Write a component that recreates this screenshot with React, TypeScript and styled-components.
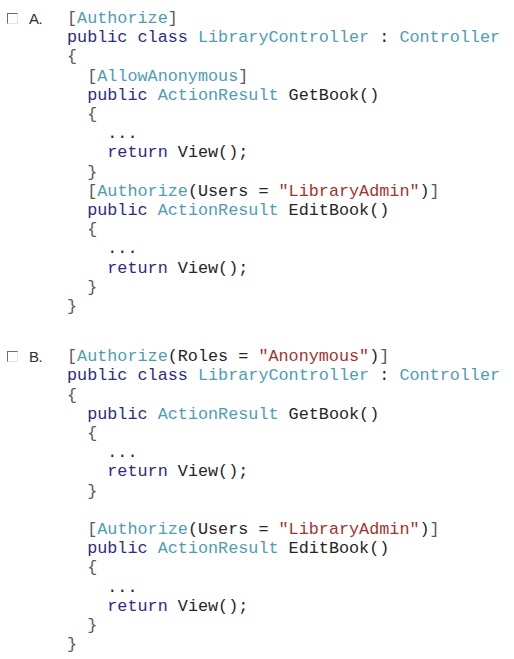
import React from "react";
import styled, { createGlobalStyle } from "styled-components";

const Global = createGlobalStyle`
  html, body { margin: 0; padding: 0; background: #ffffff; }
  body { width: 514px; height: 659px; overflow: hidden; }
`;

const Page = styled.main`
  display: flex;
  flex-direction: column;
  gap: 31px;
  padding-top: 9px;
`;

const Option = styled.section`
  display: flex;
  align-items: flex-start;
`;

const Marker = styled.div`
  width: 60px;
  flex: none;
  display: flex;
  align-items: center;
  gap: 11px;
  padding-left: 7px;
  height: 19px;
`;

const Checkbox = styled.span`
  display: block;
  width: 11px;
  height: 11px;
  box-sizing: border-box;
  border-top: 1px solid #6e6e6e;
  border-left: 1px solid #6e6e6e;
  border-right: 1px solid #e4e4e4;
  border-bottom: 1px solid #e4e4e4;
  background: #fff;
`;

const Letter = styled.span`
  font-family: "Liberation Sans", Arial, sans-serif;
  font-size: 15px;
  color: #2f2f2f;
  letter-spacing: -0.5px;
`;

const Code = styled.pre`
  margin: 0;
  font-family: "Liberation Mono", "Courier New", monospace;
  font-size: 16.8px;
  line-height: 19.2px;
  color: #262626;
`;

type Kind = "kw" | "type" | "str" | "punct" | "plain";

const colors: Record<Kind, string> = {
  kw: "#2c2c86",
  type: "#4e9db3",
  str: "#a3332f",
  punct: "#5a5a5a",
  plain: "#262626",
};

const Tok = styled.span<{ $kind: Kind }>`
  color: ${(p) => colors[p.$kind]};
`;

const KEYWORDS = new Set(["public", "class", "return"]);
const TYPES = new Set([
  "Authorize",
  "AllowAnonymous",
  "LibraryController",
  "Controller",
  "ActionResult",
]);

function tokenize(line: string): { text: string; kind: Kind }[] {
  const out: { text: string; kind: Kind }[] = [];
  const re = /("[^"]*")|([A-Za-z_]+)|([\[\]{}])|([^A-Za-z_"\[\]{}]+)/g;
  let m: RegExpExecArray | null;
  while ((m = re.exec(line))) {
    if (m[1]) out.push({ text: m[1], kind: "str" });
    else if (m[2]) {
      const w = m[2];
      out.push({
        text: w,
        kind: KEYWORDS.has(w) ? "kw" : TYPES.has(w) ? "type" : "plain",
      });
    } else if (m[3]) out.push({ text: m[3], kind: "punct" });
    else out.push({ text: m[4], kind: "plain" });
  }
  return out;
}

const codeA = `[Authorize]
public class LibraryController : Controller
{
  [AllowAnonymous]
  public ActionResult GetBook()
  {
    ...
    return View();
  }
  [Authorize(Users = "LibraryAdmin")]
  public ActionResult EditBook()
  {
    ...
    return View();
  }
}`;

const codeB = `[Authorize(Roles = "Anonymous")]
public class LibraryController : Controller
{
  public ActionResult GetBook()
  {
    ...
    return View();
  }

  [Authorize(Users = "LibraryAdmin")]
  public ActionResult EditBook()
  {
    ...
    return View();
  }
}`;

const CodeBlock: React.FC<{ source: string }> = ({ source }) => (
  <Code>
    {source.split("\n").map((line, i) => (
      <React.Fragment key={i}>
        {tokenize(line).map((t, j) => (
          <Tok key={j} $kind={t.kind}>
            {t.text}
          </Tok>
        ))}
        {"\n"}
      </React.Fragment>
    ))}
  </Code>
);

const options = [
  { letter: "A.", code: codeA },
  { letter: "B.", code: codeB },
];

export default function App() {
  return (
    <>
      <Global />
      <Page>
        {options.map((o) => (
          <Option key={o.letter}>
            <Marker>
              <Checkbox />
              <Letter>{o.letter}</Letter>
            </Marker>
            <CodeBlock source={o.code} />
          </Option>
        ))}
      </Page>
    </>
  );
}
